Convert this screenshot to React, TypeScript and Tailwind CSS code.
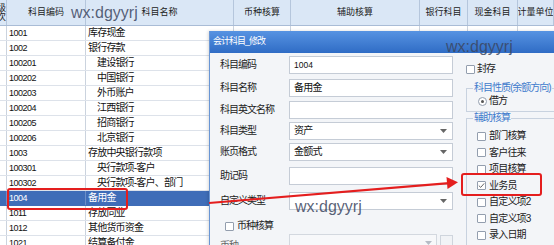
import React from "react";

const rows = [
  { code: "1001", name: "库存现金", lv: 1 },
  { code: "1002", name: "银行存款", lv: 1 },
  { code: "100201", name: "建设银行", lv: 2 },
  { code: "100202", name: "中国银行", lv: 2 },
  { code: "100203", name: "外币账户", lv: 2 },
  { code: "100204", name: "江西银行", lv: 2 },
  { code: "100205", name: "招商银行", lv: 2 },
  { code: "100206", name: "北京银行", lv: 2 },
  { code: "1003", name: "存放中央银行款项", lv: 1 },
  { code: "100301", name: "央行款项-客户", lv: 2 },
  { code: "100302", name: "央行款项-客户、部门", lv: 2 },
  { code: "1004", name: "备用金", lv: 1, sel: true },
  { code: "1011", name: "存放同业", lv: 1 },
  { code: "1012", name: "其他货币资金", lv: 1 },
  { code: "1021", name: "结算备付金", lv: 1 },
];

const cols = "grid grid-cols-[7px_79px_148px_57px_129px_48px_50px_36px]";
const cjk = "font-['Liberation_Sans','Noto_Sans_CJK_SC',sans-serif]";

function Check({ checked }: { checked?: boolean }) {
  return (
    <span className="w-[9px] h-[9px] border border-[#939eae] bg-white rounded-[1px] flex items-center justify-center shrink-0">
      {checked && (
        <svg width="7" height="7" viewBox="0 0 7 7">
          <path d="M0.8 3.6 L2.7 5.4 L6.2 1.4" fill="none" stroke="#666" strokeWidth="1" />
        </svg>
      )}
    </span>
  );
}

function Caret({ light }: { light?: boolean }) {
  return (
    <svg width="7" height="4" viewBox="0 0 7 4" className="shrink-0">
      <path d="M0 0H7L3.5 4Z" fill={light ? "#b5bcc6" : "#666"} />
    </svg>
  );
}

function Field({ label, value, drop, mt, num }: { label: string; value?: string; drop?: boolean; mt: string; num?: boolean }) {
  return (
    <div className={`flex items-center h-[18px] ${mt}`}>
      <span className="w-[69px] text-[10px] tracking-[-1px] text-[#222] leading-none">{label}</span>
      <div className="w-[164px] h-full border border-[#c5ccd6] bg-white flex items-center justify-between pl-[4px] pr-[5px]">
        <span className={`${num ? "text-[8.5px]" : "text-[10px] tracking-[-0.8px]"} text-[#111] leading-none`}>{value}</span>
        {drop && <Caret />}
      </div>
    </div>
  );
}

export default function App() {
  return (
    <div className={`relative w-[554px] h-[245px] overflow-hidden bg-white ${cjk}`}>
      {/* table header */}
      <div className={`${cols} h-[26px] bg-[#dae7f6] border-b border-[#a9bcd6] text-[9px] text-[#222]`}>
        <div className="border-r border-[#b5c6dc] overflow-hidden flex flex-col justify-center leading-[9px]">
          <span className="-ml-[3px]">级</span>
          <span className="-ml-[3px]">次</span>
        </div>
        {["科目编码", "科目名称", "币种核算", "辅助核算", "银行科目", "现金科目", "计量单位"].map((h) => (
          <div key={h} className="border-r border-[#b5c6dc] flex items-center justify-center whitespace-nowrap overflow-hidden">
            {h}
          </div>
        ))}
      </div>

      {/* table rows */}
      {rows.map((r) => (
        <div
          key={r.code}
          className={`${cols} h-[15px] border-b ${r.sel ? "bg-[#3f6db8] text-white border-[#3f6db8]" : "text-[#111] border-[#dde2ea]"}`}
        >
          <div className={`border-r ${r.sel ? "border-[#6d8fc8]" : "border-[#cbd3de]"}`} />
          <div className={`border-r ${r.sel ? "border-[#6d8fc8]" : "border-[#cbd3de]"} flex items-center pl-[2px] text-[9px] tracking-[-0.5px] leading-none`}>
            {r.code}
          </div>
          <div className={`border-r border-[#cbd3de] flex items-center ${r.lv === 2 ? "pl-[11px]" : "pl-[2px]"} text-[10px] tracking-[-0.8px] leading-none whitespace-nowrap`}>
            {r.name}
          </div>
          <div className="border-r border-[#cbd3de]" />
          <div className="border-r border-[#cbd3de]" />
          <div className="border-r border-[#cbd3de]" />
          <div className="border-r border-[#cbd3de]" />
          <div />
        </div>
      ))}

      {/* dialog */}
      <div className="absolute left-[209px] top-[31px] w-[360px] h-[230px] bg-[#f3f5f8] border-l border-[#6a96d4] shadow-[-1px_0_3px_rgba(0,0,0,0.15)]">
        <div className="h-[22px] bg-gradient-to-b from-[#5793e2] to-[#2f6cc5] flex items-center pl-[3px] text-white text-[9px] tracking-[-1px]">
          会计科目_修改
        </div>
        <div className="flex">
          <div className="w-[243px] pl-[10px] flex flex-col">
            <Field label="科目编码" value="1004" num mt="mt-[3px]" />
            <Field label="科目名称" value="备用金" mt="mt-[5px]" />
            <Field label="科目英文名称" mt="mt-[4px]" />
            <Field label="科目类型" value="资产" drop mt="mt-[3px]" />
            <Field label="账页格式" value="金额式" drop mt="mt-[3px]" />
            <Field label="助记码" mt="mt-[6px]" />
            <Field label="自定义类型" drop mt="mt-[7px]" />
            <div className="flex items-center h-[14px] mt-[9px] pl-[5px] gap-[3px]">
              <Check />
              <span className="text-[10px] tracking-[-1px] text-[#222] leading-none">币种核算</span>
            </div>
            <div className="flex items-center h-[18px] mt-[1px]">
              <span className="w-[69px] text-[10px] tracking-[-1px] text-[#666] leading-none pt-[6px]">币种</span>
              <div className="w-[148px] h-full border border-[#d3d8df] bg-[#f7f8fa] flex items-center justify-end pr-[4px]">
                <Caret light />
              </div>
              <div className="ml-[3px] w-[13px] h-[16px] border border-[#cfd5dd] bg-[#f1f3f6] text-[7px] text-[#999] flex items-end justify-center leading-[8px]">
                ...
              </div>
            </div>
          </div>

          <div className="flex-1 pl-[9px] flex flex-col">
            <div className="flex items-center h-[12px] mt-[10px] ml-[4px] gap-[2px]">
              <Check />
              <span className="text-[10px] tracking-[-1px] text-[#222] leading-none">封存</span>
            </div>
            <fieldset className="mt-[7px] ml-[4px] h-[30px] border border-r-0 border-[#c8d2df]">
              <legend className="ml-[6px] px-[1px] text-[10px] tracking-[-1px] leading-[12px] text-[#3f7bcc]">科目性质(余额方向)</legend>
              <div className="flex items-center h-[14px] pl-[11px] gap-[2px]">
                <span className="w-[9px] h-[9px] rounded-full border border-[#939eae] bg-white flex items-center justify-center">
                  <span className="w-[3px] h-[3px] rounded-full bg-[#555]" />
                </span>
                <span className="text-[10px] tracking-[-1px] text-[#222] leading-none">借方</span>
              </div>
            </fieldset>
            <fieldset className="ml-[4px] h-[160px] border border-r-0 border-b-0 border-[#c8d2df]">
              <legend className="ml-[6px] px-[1px] text-[10px] tracking-[-1px] leading-[12px] text-[#3f7bcc]">辅助核算</legend>
              <div className="pt-[4px] flex flex-col">
                {["部门核算", "客户往来", "项目核算", "业务员", "自定义项2", "自定义项3", "录入日期"].map((t) => (
                  <div key={t} className="flex items-center h-[16.5px] pl-[10px] gap-[3px]">
                    <Check checked={t === "业务员"} />
                    <span className="text-[10px] tracking-[-0.8px] text-[#222] leading-none">{t}</span>
                  </div>
                ))}
              </div>
            </fieldset>
          </div>
        </div>
      </div>

      {/* watermarks */}
      <span className="absolute left-[71px] top-[5px] text-[16px] leading-none text-[#3b4660]/85 font-['Liberation_Sans',sans-serif]">wx:dgyyrj</span>
      <span className="absolute left-[446px] top-[39px] text-[16px] leading-none text-[#3b4660]/85 font-['Liberation_Sans',sans-serif]">wx:dgyyrj</span>
      <span className="absolute left-[295px] top-[199px] text-[16px] leading-none text-[#3b4660]/85 font-['Liberation_Sans',sans-serif]">wx:dgyyrj</span>

      {/* annotations */}
      <div className="absolute left-[7px] top-[188px] w-[121px] h-[22px] border-2 border-[#e41e1e] rounded-[3px]" />
      <div className="absolute left-[461px] top-[173px] w-[81px] h-[23px] border-2 border-[#e41e1e] rounded-[3px]" />
      <svg className="absolute left-0 top-0 pointer-events-none" width="554" height="245" viewBox="0 0 554 245">
        <line x1="209" y1="203" x2="449" y2="183.2" stroke="#e41e1e" strokeWidth="2.2" />
        <polygon points="458,182.3 447.5,188.9 446.5,176.9" fill="#e41e1e" />
      </svg>
    </div>
  );
}
